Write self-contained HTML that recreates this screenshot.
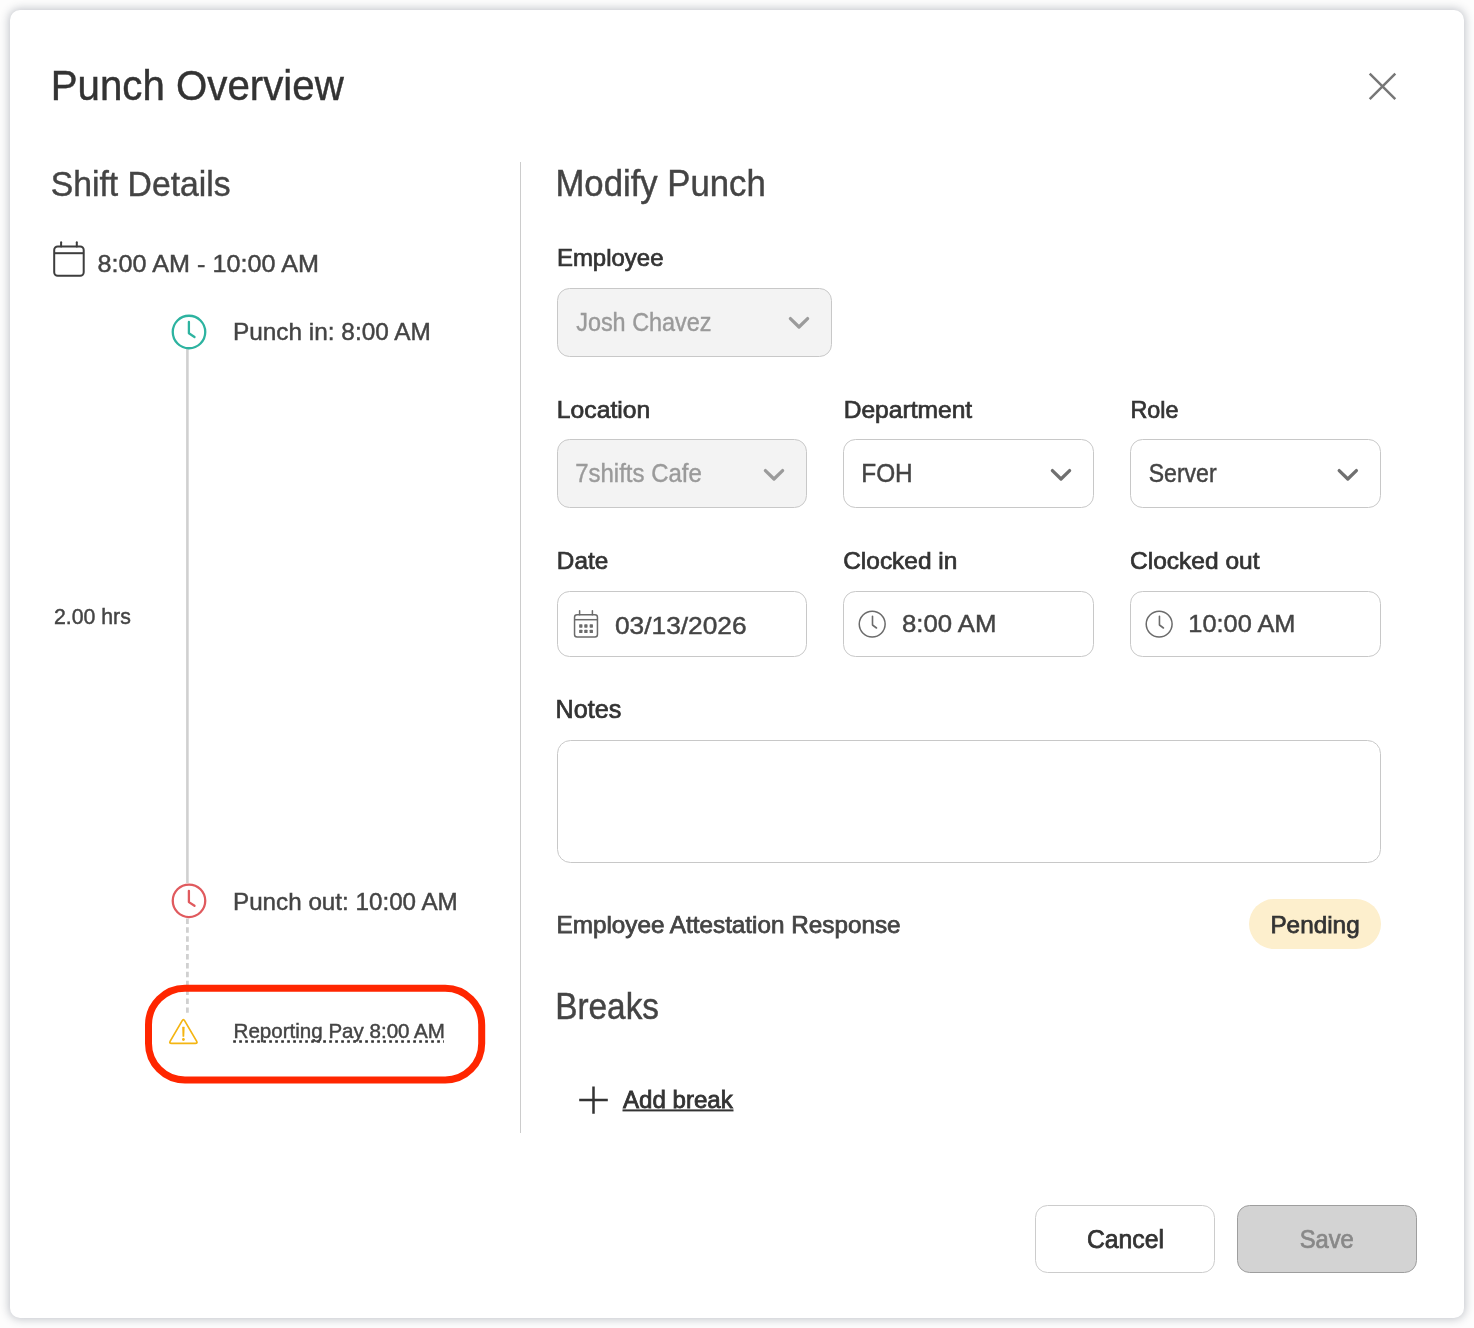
<!DOCTYPE html>
<html><head><meta charset="utf-8"><title>Punch Overview</title>
<style>
html,body{margin:0;padding:0;width:1474px;height:1328px;overflow:hidden;background:#fdfdfd;}
#modal{position:absolute;left:10px;top:10px;width:1454px;height:1308px;background:#ffffff;border-radius:10px;
box-shadow:0 0 10px 1px rgba(30,40,60,0.28);}
svg{position:absolute;left:0;top:0;will-change:transform;}
text{font-family:"Liberation Sans",sans-serif;}
</style></head><body>
<div id="modal"></div>
<svg width="1474" height="1328" viewBox="0 0 1474 1328">
<rect x='520' y='162' width='1' height='971' fill='#cccccc'/>
<path d='M1369.7 73.7 L1395.3 99.1 M1395.3 73.7 L1369.7 99.1' stroke='#777777' stroke-width='2.5' fill='none'/>
<rect x='54.2' y='246.5' width='29.5' height='29.2' rx='3.5' fill='none' stroke='#3d3d3d' stroke-width='2'/><line x1='54.2' y1='253.2' x2='83.7' y2='253.2' stroke='#3d3d3d' stroke-width='2'/><line x1='61.1' y1='242.2' x2='61.1' y2='246.5' stroke='#3d3d3d' stroke-width='2' stroke-linecap='round'/><line x1='76.8' y1='242.2' x2='76.8' y2='246.5' stroke='#3d3d3d' stroke-width='2' stroke-linecap='round'/>
<rect x='186.1' y='349' width='2.6' height='534' fill='#d0d0d0'/>
<line x1='187.4' y1='918.4' x2='187.4' y2='1012.8' stroke='#d0d0d0' stroke-width='2.8' stroke-dasharray='5.5 3.4'/>
<circle cx='189' cy='332' r='16.25' fill='#fff' stroke='#2db3a0' stroke-width='2.3'/><polyline points='188.9,322.0 188.9,333.3 194.5,337' fill='none' stroke='#2db3a0' stroke-width='2.3' stroke-linecap='round' stroke-linejoin='round'/>
<circle cx='189' cy='900.8' r='16.25' fill='#fff' stroke='#e05a5e' stroke-width='2.3'/><polyline points='188.9,890.8 188.9,902.0999999999999 194.5,905.8' fill='none' stroke='#e05a5e' stroke-width='2.3' stroke-linecap='round' stroke-linejoin='round'/>
<path d='M182.08 1020.84 L170.22 1041.06 Q168.90 1043.30 171.50 1043.30 L195.30 1043.30 Q197.90 1043.30 196.58 1041.06 L184.72 1020.84 Q183.40 1018.60 182.08 1020.84 Z' fill='none' stroke='#f4b512' stroke-width='1.7' stroke-linejoin='round'/><path d='M182.45 1027.0 L184.35 1027.0 L184.0 1036.6 L182.8 1036.6 Z' fill='#f4b512' stroke='#f4b512' stroke-width='0.5' stroke-linejoin='round'/><circle cx='183.4' cy='1039.5' r='1.4' fill='#f4b512'/>
<line x1='233.2' y1='1041.5' x2='444' y2='1041.5' stroke='#333333' stroke-width='2.7' stroke-dasharray='2.7 3.3'/>
<rect x='148.5' y='988.2' width='333.2' height='91.8' rx='36.5' fill='none' stroke='#ff2600' stroke-width='7'/>
<rect x='557.5' y='288.5' width='274' height='68' rx='12' fill='#f3f3f3' stroke='#c8c8c8' stroke-width='1'/>
<rect x='557.5' y='439.5' width='249' height='68' rx='12' fill='#f3f3f3' stroke='#c8c8c8' stroke-width='1'/>
<rect x='843.5' y='439.5' width='250' height='68' rx='12' fill='#ffffff' stroke='#c8c8c8' stroke-width='1'/>
<rect x='1130.5' y='439.5' width='250' height='68' rx='12' fill='#ffffff' stroke='#c8c8c8' stroke-width='1'/>
<rect x='557.5' y='591.5' width='249' height='65' rx='12' fill='#ffffff' stroke='#c8c8c8' stroke-width='1'/>
<rect x='843.5' y='591.5' width='250' height='65' rx='12' fill='#ffffff' stroke='#c8c8c8' stroke-width='1'/>
<rect x='1130.5' y='591.5' width='250' height='65' rx='12' fill='#ffffff' stroke='#c8c8c8' stroke-width='1'/>
<rect x='557.5' y='740.5' width='823' height='122' rx='13' fill='#ffffff' stroke='#c8c8c8' stroke-width='1'/>
<rect x='1249' y='899' width='132' height='50' rx='25' fill='#fdefcd'/>
<rect x='1035.5' y='1205.5' width='179' height='67' rx='12' fill='#ffffff' stroke='#cccccc' stroke-width='1'/>
<rect x='1237.5' y='1205.5' width='179' height='67' rx='12' fill='#d3d3d3' stroke='#9e9e9e' stroke-width='1'/>
<polyline points='790.40,318.60 799.00,327.00 807.60,318.60' fill='none' stroke='#9b9b9b' stroke-width='3.3' stroke-linecap='round' stroke-linejoin='round'/>
<polyline points='765.40,470.60 774.00,479.00 782.60,470.60' fill='none' stroke='#9b9b9b' stroke-width='3.3' stroke-linecap='round' stroke-linejoin='round'/>
<polyline points='1052.40,470.60 1061.00,479.00 1069.60,470.60' fill='none' stroke='#707070' stroke-width='3.3' stroke-linecap='round' stroke-linejoin='round'/>
<polyline points='1339.20,470.60 1347.80,479.00 1356.40,470.60' fill='none' stroke='#707070' stroke-width='3.3' stroke-linecap='round' stroke-linejoin='round'/>
<rect x='574.55' y='614.65' width='22.9' height='22.3' rx='2.5' fill='none' stroke='#6b6b6b' stroke-width='1.5'/><line x1='574.55' y1='619.7' x2='597.45' y2='619.7' stroke='#6b6b6b' stroke-width='1.5'/><line x1='579.6' y1='610.8' x2='579.6' y2='614.65' stroke='#6b6b6b' stroke-width='1.5' stroke-linecap='round'/><line x1='592.4' y1='610.8' x2='592.4' y2='614.65' stroke='#6b6b6b' stroke-width='1.5' stroke-linecap='round'/>
<rect x='579.15' y='624.35' width='3.3' height='3.3' rx='0.6' fill='#6b6b6b'/>
<rect x='579.15' y='629.75' width='3.3' height='3.3' rx='0.6' fill='#6b6b6b'/>
<rect x='584.25' y='624.35' width='3.3' height='3.3' rx='0.6' fill='#6b6b6b'/>
<rect x='584.25' y='629.75' width='3.3' height='3.3' rx='0.6' fill='#6b6b6b'/>
<rect x='589.65' y='624.35' width='3.3' height='3.3' rx='0.6' fill='#6b6b6b'/>
<rect x='589.65' y='629.75' width='3.3' height='3.3' rx='0.6' fill='#6b6b6b'/>
<circle cx='872.2' cy='624.1' r='12.95' fill='none' stroke='#6b6b6b' stroke-width='1.5'/><polyline points='872.5,616.2 872.5,625.0 876.5,628.0' fill='none' stroke='#6b6b6b' stroke-width='1.6' stroke-linecap='round' stroke-linejoin='round'/>
<circle cx='1159.15' cy='624.1' r='12.95' fill='none' stroke='#6b6b6b' stroke-width='1.5'/><polyline points='1159.45,616.2 1159.45,625.0 1163.45,628.0' fill='none' stroke='#6b6b6b' stroke-width='1.6' stroke-linecap='round' stroke-linejoin='round'/>
<path d='M579.2 1100.1 L607.8 1100.1 M593.5 1086.4 L593.5 1113.8' stroke='#333333' stroke-width='2.5' fill='none'/>
<rect x='622.5' y='1109.4' width='111' height='2' fill='#333333'/>
<text x='50.69' y='99.90' font-size='43.02' fill='#333333' stroke='#333333' stroke-width='0.45' textLength='293.05' lengthAdjust='spacingAndGlyphs'>Punch Overview</text>
<text x='50.76' y='196.10' font-size='35.89' fill='#444444' stroke='#444444' stroke-width='0.45' textLength='179.84' lengthAdjust='spacingAndGlyphs'>Shift Details</text>
<text x='555.43' y='196.40' font-size='36.31' fill='#444444' stroke='#444444' stroke-width='0.45' textLength='210.31' lengthAdjust='spacingAndGlyphs'>Modify Punch</text>
<text x='97.57' y='271.80' font-size='24.58' fill='#444444' stroke='#444444' stroke-width='0.45' textLength='221.45' lengthAdjust='spacingAndGlyphs'>8:00 AM - 10:00 AM</text>
<text x='233.01' y='339.90' font-size='24.44' fill='#444444' stroke='#444444' stroke-width='0.45' textLength='197.73' lengthAdjust='spacingAndGlyphs'>Punch in: 8:00 AM</text>
<text x='233.00' y='909.60' font-size='24.16' fill='#444444' stroke='#444444' stroke-width='0.45' textLength='224.79' lengthAdjust='spacingAndGlyphs'>Punch out: 10:00 AM</text>
<text x='233.62' y='1037.60' font-size='20.95' fill='#444444' stroke='#444444' stroke-width='0.45' textLength='211.28' lengthAdjust='spacingAndGlyphs'>Reporting Pay 8:00 AM</text>
<text x='53.91' y='623.90' font-size='21.51' fill='#444444' stroke='#444444' stroke-width='0.45' textLength='76.87' lengthAdjust='spacingAndGlyphs'>2.00 hrs</text>
<text x='556.91' y='266.00' font-size='24.16' fill='#333333' stroke='#333333' stroke-width='0.7' textLength='106.61' lengthAdjust='spacingAndGlyphs'>Employee</text>
<text x='576.20' y='330.70' font-size='25.00' fill='#9a9a9a' stroke='#9a9a9a' stroke-width='0.4' textLength='135.30' lengthAdjust='spacingAndGlyphs'>Josh Chavez</text>
<text x='556.88' y='417.90' font-size='24.16' fill='#333333' stroke='#333333' stroke-width='0.7' textLength='93.37' lengthAdjust='spacingAndGlyphs'>Location</text>
<text x='843.68' y='417.90' font-size='24.16' fill='#333333' stroke='#333333' stroke-width='0.7' textLength='128.52' lengthAdjust='spacingAndGlyphs'>Department</text>
<text x='1130.43' y='417.90' font-size='24.16' fill='#333333' stroke='#333333' stroke-width='0.7' textLength='48.03' lengthAdjust='spacingAndGlyphs'>Role</text>
<text x='575.24' y='481.60' font-size='25.00' fill='#9a9a9a' stroke='#9a9a9a' stroke-width='0.4' textLength='126.53' lengthAdjust='spacingAndGlyphs'>7shifts Cafe</text>
<text x='861.25' y='481.60' font-size='25.00' fill='#444444' stroke='#444444' stroke-width='0.45' textLength='51.49' lengthAdjust='spacingAndGlyphs'>FOH</text>
<text x='1148.78' y='481.60' font-size='25.00' fill='#444444' stroke='#444444' stroke-width='0.45' textLength='67.79' lengthAdjust='spacingAndGlyphs'>Server</text>
<text x='556.89' y='568.90' font-size='24.16' fill='#333333' stroke='#333333' stroke-width='0.7' textLength='51.34' lengthAdjust='spacingAndGlyphs'>Date</text>
<text x='843.19' y='568.90' font-size='24.16' fill='#333333' stroke='#333333' stroke-width='0.7' textLength='114.22' lengthAdjust='spacingAndGlyphs'>Clocked in</text>
<text x='1129.98' y='568.90' font-size='24.16' fill='#333333' stroke='#333333' stroke-width='0.7' textLength='129.59' lengthAdjust='spacingAndGlyphs'>Clocked out</text>
<text x='614.92' y='633.60' font-size='24.30' fill='#444444' stroke='#444444' stroke-width='0.45' textLength='131.74' lengthAdjust='spacingAndGlyphs'>03/13/2026</text>
<text x='901.95' y='631.90' font-size='24.58' fill='#444444' stroke='#444444' stroke-width='0.45' textLength='94.59' lengthAdjust='spacingAndGlyphs'>8:00 AM</text>
<text x='1188.37' y='631.90' font-size='24.58' fill='#444444' stroke='#444444' stroke-width='0.45' textLength='107.15' lengthAdjust='spacingAndGlyphs'>10:00 AM</text>
<text x='555.59' y='718.00' font-size='25.00' fill='#333333' stroke='#333333' stroke-width='0.7' textLength='65.73' lengthAdjust='spacingAndGlyphs'>Notes</text>
<text x='556.50' y='933.10' font-size='24.16' fill='#444444' stroke='#444444' stroke-width='0.75' textLength='344.03' lengthAdjust='spacingAndGlyphs'>Employee Attestation Response</text>
<text x='1270.40' y='932.60' font-size='24.44' fill='#333333' stroke='#333333' stroke-width='0.75' textLength='89.28' lengthAdjust='spacingAndGlyphs'>Pending</text>
<text x='555.22' y='1018.90' font-size='36.03' fill='#444444' stroke='#444444' stroke-width='0.45' textLength='103.79' lengthAdjust='spacingAndGlyphs'>Breaks</text>
<text x='623.00' y='1107.80' font-size='24.02' fill='#333333' stroke='#333333' stroke-width='0.8' textLength='109.78' lengthAdjust='spacingAndGlyphs'>Add break</text>
<text x='1086.91' y='1247.90' font-size='25.14' fill='#333333' stroke='#333333' stroke-width='0.75' textLength='77.09' lengthAdjust='spacingAndGlyphs'>Cancel</text>
<text x='1299.65' y='1247.90' font-size='25.14' fill='#888888' stroke='#888888' stroke-width='0.7' textLength='54.21' lengthAdjust='spacingAndGlyphs'>Save</text>
</svg>
</body></html>
